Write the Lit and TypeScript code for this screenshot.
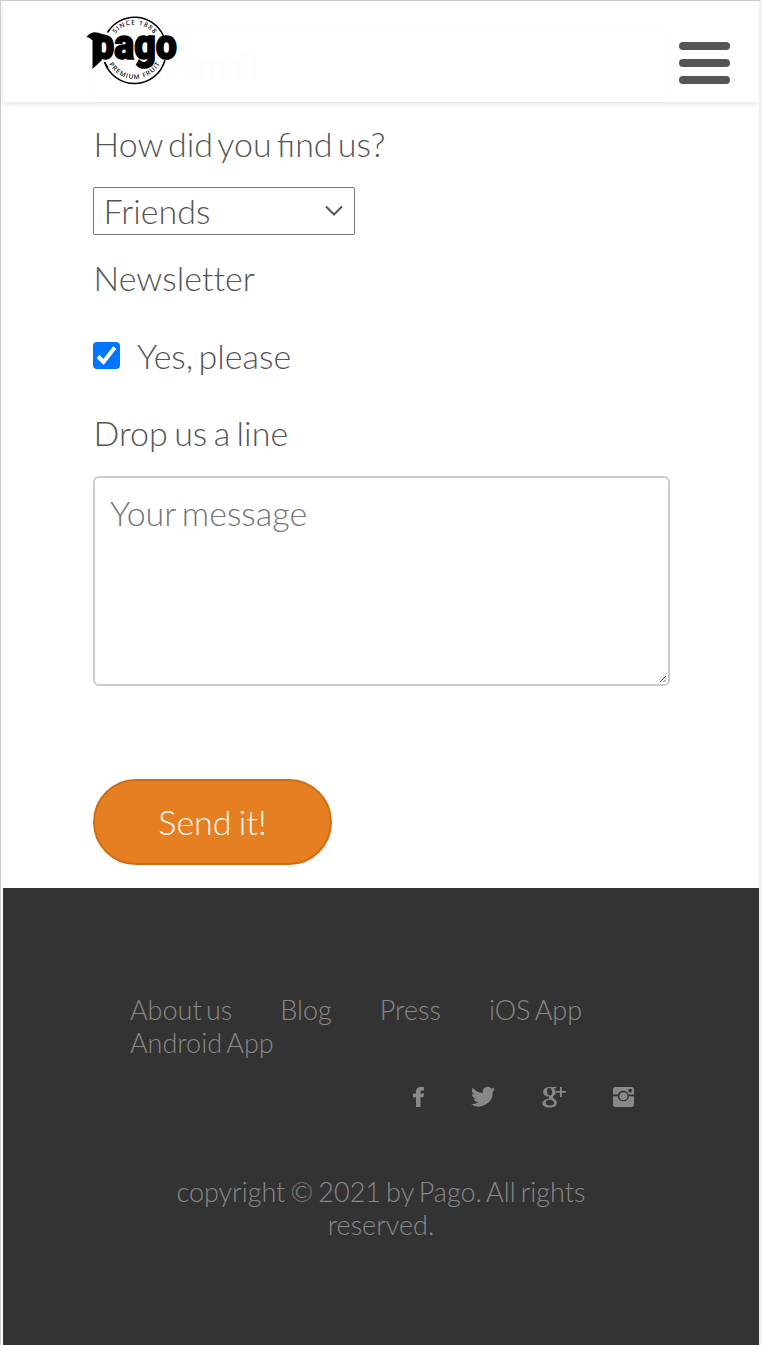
import { LitElement, html, css } from "lit";
import { customElement } from "lit/decorators.js";

@customElement("pago-logo")
class PagoLogo extends LitElement {
  static styles = css`
    :host { display: block; width: 96px; height: 70px; }
    svg { display: block; overflow: visible; }
    .ring { font: 600 6.500px "Open Sans", sans-serif; fill: #222; }
    .word { font: 900 42px "Roboto", sans-serif; fill: #000; stroke: #000; stroke-width: 1.600; }
  `;
  render() {
    return html`<svg width="96" height="70" viewBox="84 15 96 70">
      <defs>
        <path id="up" d="M110 49 A24.500 24.500 0 0 1 159 49" />
        <path id="down" d="M105.500 50 A29 29 0 0 0 163.500 50" />
      </defs>
      <g fill="none" stroke="#000" stroke-width="1.500">
        <path d="M107.500 32.500 A31.600 31.600 0 0 1 163.500 36" />
        <path d="M104.500 62 A31.600 31.600 0 0 0 165 60" />
      </g>
      <text class="ring" text-anchor="middle"><textPath href="#up" startOffset="50%" textLength="44">SINCE 1888</textPath></text>
      <text class="ring" text-anchor="middle"><textPath href="#down" startOffset="50%" textLength="62">PREMIUM FRUIT</textPath></text>
      <path d="M86.500 37 Q91 31.500 97 32.500 L108 35.500 V38 H101 V61 L92.500 69 V40.500 Q89 37 86.500 37Z" />
      <text class="word" x="93" y="59" textLength="84" lengthAdjust="spacingAndGlyphs">pago</text>
      <path d="M104 60.500 H101.500 L92 69.500 V71 H104Z" fill="#fff" />
      <path d="M104.500 62 A31.600 31.600 0 0 0 108 67.500" fill="none" stroke="#000" stroke-width="1.500" />
    </svg>`;
  }
}

@customElement("social-icons")
class SocialIcons extends LitElement {
  static styles = css`
    :host { display: block; color: #888; }
    .list { display: flex; justify-content: flex-end; height: 24px; }
    svg { display: block; fill: currentColor; flex: none; }
  `;
  render() {
    return html`<div class="list">
      <svg width="237" height="24" viewBox="405 1085 237 24">
        <path d="M424 1087h-3.500q-4.500 0-4.500 4.600v2h-3v3.600h3v9.800h4.500v-9.800h3l.5-3.600h-3.500v-1.500q0-1.500 1.500-1.500h2z" />
        <path transform="translate(471 1086.500) scale(1.010 1)" d="M24 2.600a9.800 9.800 0 0 1-2.800.8A4.900 4.900 0 0 0 23.300.7a9.800 9.800 0 0 1-3.100 1.200 4.900 4.900 0 0 0-8.400 4.500A14 14 0 0 1 1.700 1.300a4.900 4.900 0 0 0 1.500 6.500 4.900 4.900 0 0 1-2.200-.6 4.900 4.900 0 0 0 3.900 4.900 4.900 4.900 0 0 1-2.200.1 4.900 4.900 0 0 0 4.600 3.400A9.900 9.900 0 0 1 0 17.800a14 14 0 0 0 21.500-12.500A10 10 0 0 0 24 2.600z" />
        <path fill-rule="evenodd" d="M550 1087h7l-1.500 1.200h-2q2.200 1.400 2.200 4 0 2.300-2 3.900c-1.500 1.300-1 1.900.8 3 1.600 1 2.300 2.200 2.300 3.800 0 2.600-2.700 4.600-7.200 4.600-4.200 0-7.100-1.500-7.100-4.100 0-2.900 3.200-4.500 7-4.600q-.9-1-.4-2.300c-3.800.1-5.900-1.900-5.900-4.600 0-2.900 2.900-4.900 6.800-4.900zM549 1088q-2.200.3-2 3.600c.3 2.600 1.300 3.900 2.900 3.900s2.500-1.500 2.200-4c-.3-2.200-1.400-3.600-3.100-3.500zM550 1099.800c-2.800 0-4.400 1.100-4.400 2.800s1.700 3 4.500 3 4.100-1.100 4.100-2.500-1.200-2-2.700-3.300zM560 1087h1.800v4h4.200v1.800h-4.200v4.200H560v-4.200h-4v-1.800h4z" />
        <path fill-rule="evenodd" d="M615.500 1087h16q2.500 0 2.500 2.500v5h-5.500a5.600 5.600 0 0 0-10.500 0h-5v-5q0-2.500 2.500-2.500zM628.500 1089v3.200h3.200V1089zM613 1096.200h4.700a5.700 5.700 0 0 0 11.300 0h5v8.300q0 2.500-2.500 2.500h-16q-2.500 0-2.500-2.500z" />
        <circle cx="623.400" cy="1096.300" r="4" />
      </svg>
    </div>`;
  }
}

@customElement("app-root")
class AppRoot extends LitElement {
  static styles = css`
    :host { display: block; font-family: Lato, sans-serif; font-weight: 300; color: #555; font-size: 34px; word-spacing: -4px; }
    * { box-sizing: border-box; }
    .frame { height: 1345px; background: #fff; border-top: 1px solid #ccc; border-left: 1px solid #ccc; border-right: 3px solid #f1f1f1; padding-left: 2px; display: flex; flex-direction: column; overflow: hidden; }
    header { position: relative; height: 101px; flex: none; display: flex; justify-content: space-between; padding: 14px 29px 0 81px; box-shadow: 0 2px 6px #e4e4e4; }
    .under { position: absolute; left: 90px; top: 26px; width: 577px; height: 72px; border: 2px solid #fefefe; border-radius: 6px; padding: 14px 15px; line-height: 42px; color: #fcfcfc; }
    pago-logo { position: relative; word-spacing: 0; }
    .menu { display: flex; flex-direction: column; gap: 9px; margin-top: 27px; width: 51px; }
    .menu span { height: 8px; border-radius: 4px; background: #555; }
    form { flex: none; height: 786px; padding: 21px 90px 0; display: flex; flex-direction: column; align-items: flex-start; }
    .label { line-height: 42px; height: 42px; padding-left: 0.500px; }
    .plain { font-variant-ligatures: none; }
    .drop { word-spacing: -2.800px; }
    .select { display: grid; width: 262px; height: 48px; margin: 22px 0; }
    select { grid-area: 1 / 1; appearance: none; font: inherit; color: inherit; background: #fff; border: 1px solid #767676; border-radius: 2px; padding: 0 9.500px 2px; margin: 0; }
    .select svg { grid-area: 1 / 1; justify-self: end; align-self: center; margin-right: 11px; pointer-events: none; }
    .check { display: flex; align-items: center; gap: 17px; height: 42px; margin: 35px 0 36px; }
    .box { width: 27px; height: 27px; margin-top: 1px; }
    .area { display: grid; width: 577px; height: 210px; margin: 22px 0 93px; }
    textarea { grid-area: 1 / 1; font: inherit; word-spacing: -3px; line-height: 42px; border: 2px solid #ccc; border-radius: 6px; padding: 14px 15px; resize: none; margin: 0; background: none; }
    textarea::placeholder { color: #757575; opacity: 1; }
    .area svg { grid-area: 1 / 1; place-self: end; margin: 0 3px 3px 0; }
    button { width: 239px; height: 86px; border: 2px solid #cf6d17; border-radius: 43px; background: #e67e22; color: #fff; font: inherit; word-spacing: -2px; padding: 0 0 2px; }
    footer { flex: none; height: 457px; background: #333; color: #888; font-size: 27px; line-height: 33px; padding: 105px 127px 0; word-spacing: -2.200px; }
    nav { display: flex; flex-wrap: wrap; column-gap: 48px; }
    nav span:first-child { word-spacing: -3px; }
    social-icons { margin: 26px -10px 0 0; }
    .copy { margin: 66px 0 0; text-align: center; }
  `;
  render() {
    return html`<div class="frame">
      <header>
        <div class="under">Your email</div>
        <pago-logo></pago-logo>
        <div class="menu"><span></span><span></span><span></span></div>
      </header>
      <form>
        <div class="label">How did you find us?</div>
        <div class="select">
          <select><option>Friends</option></select>
          <svg width="20" height="14" viewBox="0 0 20 14"><path d="M2 2.500 10 10.500 18 2.500" fill="none" stroke="#555" stroke-width="2" /></svg>
        </div>
        <div class="label plain">Newsletter</div>
        <div class="check">
          <svg class="box" viewBox="0 0 27 27"><rect width="27" height="27" rx="4" fill="#0075ff" /><path d="M5 14.500 10.500 20 21.800 5.500" fill="none" stroke="#fff" stroke-width="4" /></svg>
          <span>Yes, please</span>
        </div>
        <div class="label drop">Drop us a line</div>
        <div class="area">
          <textarea placeholder="Your message"></textarea>
          <svg width="8" height="8"><path d="M1 7 7 1M4.500 7 7 4.500" stroke="#555" stroke-width="1" fill="none" /></svg>
        </div>
        <button type="button">Send it!</button>
      </form>
      <footer>
        <nav><span>About us</span><span>Blog</span><span>Press</span><span>iOS App</span><span>Android App</span></nav>
        <social-icons></social-icons>
        <p class="copy">copyright © 2021 by Pago. All rights reserved.</p>
      </footer>
    </div>`;
  }
}
